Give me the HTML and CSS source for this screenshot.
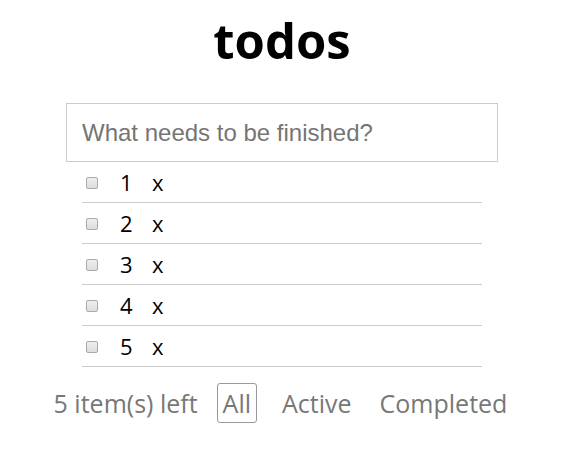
FILE: index.html
```html
<!DOCTYPE html>
<html>
<head>
<meta charset="utf-8">
<link rel="stylesheet" href="styles.css">
</head>
<body>
<div class="app">
  <h1 class="title">todos</h1>
  <input class="new-todo" type="text" placeholder="What needs to be finished?">
  <ul class="list">
    <li class="item"><input type="checkbox" class="check"><span class="label">1</span><span class="remove">x</span></li>
    <li class="item"><input type="checkbox" class="check"><span class="label">2</span><span class="remove">x</span></li>
    <li class="item"><input type="checkbox" class="check"><span class="label">3</span><span class="remove">x</span></li>
    <li class="item"><input type="checkbox" class="check"><span class="label">4</span><span class="remove">x</span></li>
    <li class="item"><input type="checkbox" class="check"><span class="label">5</span><span class="remove">x</span></li>
  </ul>
  <div class="footer">
    <span class="count">5 item(s) left</span>
    <span class="filter selected">All</span>
    <span class="filter">Active</span>
    <span class="filter">Completed</span>
  </div>
</div>
</body>
</html>
```
FILE: styles.css
```css
html, body {
  margin: 0;
  padding: 0;
  background: #fff;
}
body {
  font-family: "Open Sans", "Noto Sans", sans-serif;
  color: #000;
}
.app {
  display: flex;
  flex-direction: column;
  align-items: center;
  padding-right: 2px;
}
.title {
  margin: 8px 0 0 0;
  font-size: 49px;
  font-weight: 700;
  line-height: 64px;
  height: 95px;
}
.new-todo {
  box-sizing: border-box;
  width: 432px;
  height: 59px;
  margin: 0;
  border: 1px solid #ccc;
  padding: 0 15px;
  font-family: "Liberation Sans", Arial, sans-serif;
  font-size: 24px;
  outline: none;
}
.new-todo::placeholder {
  color: #757575;
}
.list {
  list-style: none;
  margin: 0;
  padding: 0;
  width: 400px;
}
.item {
  display: flex;
  align-items: center;
  height: 40px;
  border-bottom: 1px solid #ccc;
  font-size: 22px;
}
.check {
  appearance: none;
  -webkit-appearance: none;
  box-sizing: border-box;
  width: 12px;
  height: 12px;
  margin: 2px 0 0 4px;
  border: 1px solid #aaa;
  border-radius: 2px;
  background: linear-gradient(#eee, #ddd);
}
.label {
  margin-left: 22px;
  width: 32px;
}
.remove {
  line-height: 1;
}
.footer {
  display: flex;
  align-items: center;
  margin-top: 16px;
  font-size: 25px;
  color: #777;
}
.count {
  margin-right: 19px;
}
.filter {
  box-sizing: border-box;
  height: 40px;
  line-height: 38px;
  padding: 0 2px;
  border: 1px solid transparent;
  border-radius: 3px;
  margin-right: 22px;
}
.filter:last-child {
  margin-right: 0;
}
.filter.selected {
  border-color: #999;
  padding: 0 5px;
}
```
